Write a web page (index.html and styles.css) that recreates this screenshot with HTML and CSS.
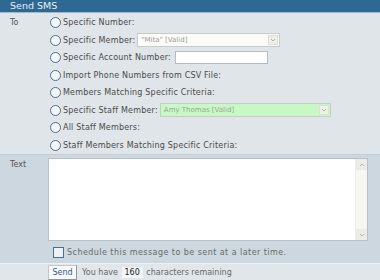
FILE: index.html
```html
<!DOCTYPE html>
<html lang="en">
<head>
    <meta charset="UTF-8">
    <title>Send SMS</title>
    <link rel="stylesheet" href="styles.css">
</head>
<body>
    <div class="panel">
        <div class="panel-title">Send SMS</div>

        <div class="row row-to">
            <div class="label">To</div>
            <div class="options">
                <label class="opt"><span class="radio"></span>Specific Number:</label>
                <label class="opt"><span class="radio"></span>Specific Member:
                    <span class="select select-member"><span class="value">"Mita" [Valid]</span><span class="arrow"><svg viewBox="0 0 8 8" width="8" height="8"><path d="M2 3l2 2 2-2" fill="none" stroke="#b0b3aa"/></svg></span></span>
                </label>
                <label class="opt"><span class="radio"></span>Specific Account Number:
                    <span class="textbox"></span>
                </label>
                <label class="opt"><span class="radio"></span>Import Phone Numbers from CSV File:</label>
                <label class="opt"><span class="radio"></span>Members Matching Specific Criteria:</label>
                <label class="opt"><span class="radio"></span>Specific Staff Member:
                    <span class="select select-staff"><span class="value">Amy Thomas [Valid]</span><span class="arrow"><svg viewBox="0 0 8 8" width="8" height="8"><path d="M2 3l2 2 2-2" fill="none" stroke="#b0b3aa"/></svg></span></span>
                </label>
                <label class="opt"><span class="radio"></span>All Staff Members:</label>
                <label class="opt"><span class="radio"></span>Staff Members Matching Specific Criteria:</label>
            </div>
        </div>

        <div class="row row-text">
            <div class="label">Text</div>
            <div class="text-wrap">
                <div class="textarea">
                    <div class="scroll">
                        <span class="sbtn"><svg viewBox="0 0 8 8" width="8" height="8"><path d="M2 5l2-2 2 2" fill="none" stroke="#b5b8ae"/></svg></span>
                        <span class="sbtn"><svg viewBox="0 0 8 8" width="8" height="8"><path d="M2 3l2 2 2-2" fill="none" stroke="#b5b8ae"/></svg></span>
                    </div>
                </div>
                <label class="schedule"><span class="checkbox"></span>Schedule this message to be sent at a later time.</label>
            </div>
        </div>

        <div class="row row-send">
            <button class="send">Send</button>
            <span class="remain">You have <span class="count">160</span> characters remaining</span>
        </div>
    </div>
</body>
</html>
```

FILE: styles.css
```css
body {
    margin: 0;
    font-family: "DejaVu Sans", Verdana, sans-serif;
    font-size: 8px;
    color: #4a4a4a;
    background: #dfe5e9;
}

.panel {
    width: 380px;
    height: 280px;
    overflow: hidden;
}

.panel-title {
    height: 12px;
    line-height: 12px;
    background: #2e6994;
    border-bottom: 1px solid #9fb7c9;
    color: #e8eef3;
    font-size: 9.5px;
    padding-left: 10px;
}

.row {
    display: flex;
}

.label {
    width: 48px;
    padding-left: 10px;
    box-sizing: border-box;
    color: #555;
}

.row-to {
    background: #dfe5e9;
    height: 141px;
    border-bottom: 1px solid #c4ced6;
}

.row-to .label {
    padding-top: 5px;
}

.options {
    display: flex;
    flex-direction: column;
    padding-left: 2px;
    padding-top: 1px;
}

.opt {
    display: flex;
    align-items: center;
    height: 18px;
    white-space: nowrap;
    letter-spacing: 0.2px;
}

.radio {
    width: 9px;
    height: 9px;
    border: 1px solid #4d6d8f;
    border-radius: 50%;
    background: #f4f6f8;
    margin-right: 2px;
    flex: none;
}

.select {
    display: inline-flex;
    align-items: center;
    justify-content: space-between;
    height: 12px;
    border: 1px solid #c9ccc6;
    margin-left: 2px;
    font-size: 7px;
    color: #999;
    letter-spacing: 0;
}

.select .value {
    padding-left: 3px;
}

.select .arrow {
    display: flex;
    align-items: center;
    justify-content: center;
    width: 10px;
    height: 10px;
    margin-right: 1px;
    background: #eceee8;
    border: 1px solid #dcdfd6;
    box-sizing: border-box;
}

.select-member {
    width: 141px;
    background: #fbfcf8;
}

.select-staff {
    width: 169px;
    background: #c8f9c4;
    color: #9aa69a;
}

.select-staff .arrow {
    background: #eef0ea;
}

.textbox {
    display: inline-block;
    width: 91px;
    height: 11px;
    margin-left: 4px;
    background: #fff;
    border: 1px solid #b4bcc6;
}

.row-text {
    background: #cdd7df;
    height: 108px;
}

.row-text .label {
    padding-top: 5px;
}

.text-wrap {
    display: flex;
    flex-direction: column;
}

.textarea {
    width: 318px;
    height: 81px;
    margin-top: 3px;
    background: #fff;
    border: 1px solid #b7c0c8;
    display: flex;
    justify-content: flex-end;
}

.scroll {
    width: 11px;
    background: #f6f7f3;
    display: flex;
    flex-direction: column;
    justify-content: space-between;
    border-left: 1px solid #eceee8;
}

.sbtn {
    display: flex;
    align-items: center;
    justify-content: center;
    height: 11px;
    background: #ebece6;
}

.schedule {
    display: flex;
    align-items: center;
    margin-top: 6px;
    padding-left: 5px;
    font-size: 8px;
    letter-spacing: 0.45px;
    color: #6a6a6a;
}

.checkbox {
    width: 9px;
    height: 9px;
    border: 1px solid #4d6d8f;
    background: #eef1f4;
    margin-right: 3px;
}

.row-send {
    background: #e0e6ea;
    border-top: 1px solid #eef1f3;
    height: 17px;
    align-items: center;
    padding-left: 48px;
}

.send {
    font-family: "DejaVu Sans", Verdana, sans-serif;
    font-size: 8px;
    color: #2e5c8a;
    background: #f7f8f8;
    border: 1px solid #c2c7cc;
    border-right-color: #8f959b;
    border-bottom-color: #8f959b;
    height: 15px;
    width: 29px;
    padding: 0;
}

.remain {
    margin-left: 5px;
    color: #666;
}

.count {
    display: inline-block;
    background: #f2f4f5;
    color: #222;
    padding: 1px 3px;
    margin: 0 1px;
}
```
